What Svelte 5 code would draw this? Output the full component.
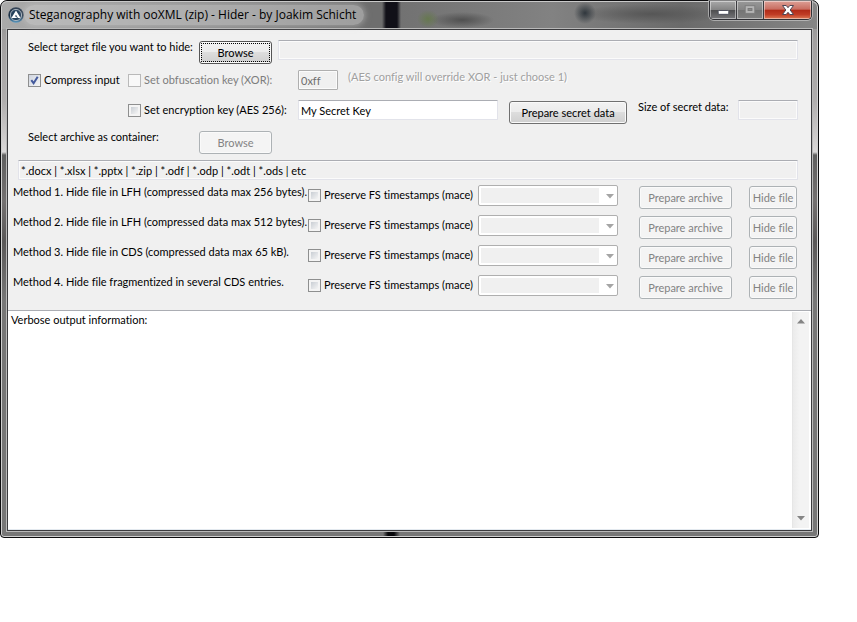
<script>
  const methods = [
    { n: 1, text: 'Hide file in LFH (compressed data max 256 bytes).' },
    { n: 2, text: 'Hide file in LFH (compressed data max 512 bytes).' },
    { n: 3, text: 'Hide file in CDS (compressed data max 65 kB).' },
    { n: 4, text: 'Hide file fragmentized in several CDS entries.' }
  ];
  let compress = $state(true);
  let useAes = $state(false);
  let secretKey = $state('My Secret Key');
  let output = $state('Verbose output information:');
</script>

<main class="window">
  <header class="titlebar">
    <svg class="logo" viewBox="0 0 16 16" aria-hidden="true">
      <defs>
        <linearGradient id="ring" x1="0" y1="0" x2="0" y2="1">
          <stop offset="0" stop-color="#38475a" />
          <stop offset="0.55" stop-color="#172c42" />
          <stop offset="1" stop-color="#5e9cc4" />
        </linearGradient>
      </defs>
      <circle cx="8" cy="8" r="7.7" fill="url(#ring)" />
      <circle cx="8" cy="8" r="5.6" fill="#26415b" stroke="#c3ccd4" stroke-width="0.8" />
      <path d="M8 3.4 12.6 11H9.9L8 7.7 6.8 9.6H8.1L9 11H3.4Z" fill="#fff" />
    </svg>
    <h1>Steganography with ooXML (zip) - Hider - by Joakim Schicht</h1>
    <div class="caption">
      <button class="min" aria-label="Minimize">
        <svg viewBox="0 0 27 18"><rect x="8.5" y="9.5" width="11" height="4" rx="1" fill="#fff" stroke="#4a4d5c" /></svg>
      </button>
      <button class="max" aria-label="Maximize" disabled>
        <svg viewBox="0 0 27 18"><rect x="8.5" y="4.5" width="10" height="8" fill="#b4b4b4" stroke="#7d7d7d" /><rect x="11.5" y="7.5" width="4" height="2" fill="#8c8c8c" stroke="#777" /></svg>
      </button>
      <button class="close" aria-label="Close">
        <svg viewBox="0 0 47 18"><path d="M18.5 4.5h3.7l1.8 2.2 1.8-2.2h3.7l-3.3 4.5 3.3 4.5h-3.7L24 11.3l-1.8 2.2h-3.7L21.8 9Z" fill="#fff" stroke="#4d4554" /></svg>
      </button>
    </div>
  </header>

  <div class="client">
    <form class="settings" onsubmit={(e) => e.preventDefault()}>
      <div class="row">
        <label class="lead" for="target">Select target file you want to hide:</label>
        <button class="btn browse focused" type="button">Browse</button>
        <input class="field grow" id="target" readonly />
      </div>
      <div class="row">
        <label class="check first"><input type="checkbox" bind:checked={compress} />Compress input</label>
        <label class="check key off"><input type="checkbox" disabled />Set obfuscation key (XOR):</label>
        <input class="field xor" aria-label="Obfuscation key" value="0xff" disabled />
        <span class="hint">(AES config will override XOR - just choose 1)</span>
      </div>
      <div class="row">
        <span class="first"></span>
        <label class="check key"><input type="checkbox" bind:checked={useAes} />Set encryption key (AES 256):</label>
        <input class="field secret" aria-label="Encryption key" bind:value={secretKey} />
        <button class="btn prepare" type="button">Prepare secret data</button>
        <label class="size" for="size">Size of secret data:</label>
        <input class="field total" id="size" readonly />
      </div>
      <div class="row">
        <label class="lead" for="container">Select archive as container:</label>
        <button class="btn browse" type="button" disabled>Browse</button>
      </div>
      <input class="field container" id="container" readonly value="*.docx | *.xlsx | *.pptx | *.zip | *.odf | *.odp | *.odt | *.ods | etc" />
    </form>

    <section class="methods">
      {#each methods as m (m.n)}
        <div class="row">
          <span class="name">Method {m.n}. {m.text}</span>
          <label class="check stamp"><input type="checkbox" />Preserve FS timestamps (mace)</label>
          <span class="combo">
            <select aria-label="Entry for method {m.n}" disabled><option></option></select>
            <svg viewBox="0 0 8 5" aria-hidden="true"><path d="M0 0h8L4 4.5Z" fill="#a5a5a5" /></svg>
          </span>
          <button class="btn archive" type="button" disabled>Prepare archive</button>
          <button class="btn hide" type="button" disabled>Hide file</button>
        </div>
      {/each}
    </section>

    <div class="log">
      <textarea aria-label="Output" bind:value={output} spellcheck="false"></textarea>
      <div class="scroll" aria-hidden="true">
        <svg viewBox="0 0 8 5"><path d="M0 4.5h8L4 0Z" fill="#858585" /></svg>
        <svg viewBox="0 0 8 5"><path d="M0 0h8L4 4.5Z" fill="#858585" /></svg>
      </div>
    </div>
  </div>
</main>

<style>
  :global(body) { background: #fff; }
  * { box-sizing: border-box; }
  .window {
    margin-right: 38px;
    padding: 0 6px 6px;
    border: 1px solid #0c0c0e;
    border-radius: 7px 7px 4px 4px;
    box-shadow: inset 0 0 0 1px #d0d0d0;
    background:
      linear-gradient(90deg, transparent 382px, #08080b 387px 393px, transparent 399px) bottom / 100% 6px no-repeat,
      linear-gradient(#8a8a8a, #a2a0a0 40px, #b0aeae 100px, #dad8d8 151px, #5f5f5f 154px, #747171 200px, #5a5858 240px, #777 300px, #777);
    font: 11px/14px Lato, "Liberation Sans", sans-serif;
    font-variant-ligatures: none;
    color: #000;
  }
  button, input, select, textarea { font: inherit; color: inherit; margin: 0; }
  .titlebar {
    display: flex;
    align-items: flex-start;
    height: 28px;
    margin: 0 -5px;
    padding-left: 6px;
    border-top: 1px solid #c9c9c9;
    border-radius: 6px 6px 0 0;
    background:
      radial-gradient(ellipse 11px 9px at 426px 17px, #66784f, transparent),
      radial-gradient(ellipse 32px 8px at 460px 18px, #505050, transparent),
      radial-gradient(circle 11px at 583px 11px, #30373d, transparent),
      radial-gradient(ellipse 76px 10px at 650px 12px, #565656, transparent),
      linear-gradient(90deg, #aaa 0, #8d8d8d 200px, #6e6e6e 365px, #6e6e6e 380px, #111018 384px 395px, #727272 399px, #828282 550px, #6a6a6a 680px, #858585);
  }
  .logo { width: 16px; height: 16px; margin-top: 5px; }
  h1 {
    margin: 3px 0 0;
    padding: 0 8px 0 5px;
    border-radius: 10px;
    background: rgb(205 205 205 / 50%);
    box-shadow: 0 0 6px 1px rgb(205 205 205 / 50%);
    font: 12px/20px "Open Sans", "Noto Sans", sans-serif;
    white-space: nowrap;
  }
  .caption {
    display: flex;
    margin: -1px 5px 0 auto;
    border: 1px solid #303035;
    border-top: 0;
    border-radius: 0 0 5px 5px;
    overflow: hidden;
    box-shadow: 0 0 0 1px rgb(210 210 210 / 60%);
  }
  .caption button {
    width: 27px;
    height: 18px;
    padding: 0;
    border: 0;
    border-right: 1px solid #3b3b3f;
    box-shadow: inset 0 0 0 1px rgb(255 255 255 / 45%);
    background: linear-gradient(#a9a9a9, #858585 48%, #4d4d4f 50%, #77777a);
  }
  .caption .max { background: linear-gradient(#999, #858585 48%, #747474 50%, #808080); }
  .caption .close {
    width: 47px;
    border-right: 0;
    background: linear-gradient(#dda096, #c96d60 46%, #b02a17 50%, #c03c25 75%, #dc7a55);
  }
  .caption svg { display: block; width: 100%; height: 18px; }
  .client {
    border: 1px solid #3b3b3e;
    outline: 1px solid #b9b9b9;
    background: #f0f0f0;
  }
  .settings { padding: 10px 13px 0 10px; }
  .row { display: flex; align-items: flex-start; height: 30px; white-space: nowrap; }
  .settings .row { padding-left: 10px; }
  .lead { width: 171px; }
  .first { flex: none; width: 100px; }
  .key { flex: none; width: 170px; }
  .check { display: flex; align-items: center; gap: 3px; height: 20px; }
  .check.off { color: #7d7d7d; }
  .check input {
    appearance: none;
    flex: none;
    width: 13px;
    height: 13px;
    border: 1px solid #8e8f8f;
    background: linear-gradient(135deg, #c9ced4, #f5f5f5) content-box, #f4f4f4;
    padding: 2px;
  }
  .check input:disabled { border-color: #b9b9b9; background: #f8f8f8; }
  .check input:checked {
    background: url("data:image/svg+xml,%3Csvg xmlns='http://www.w3.org/2000/svg' viewBox='0 0 11 11'%3E%3Cpath d='M2.3 5.2 4.6 8.2 8.7 1.8' fill='none' stroke='%23445a9c' stroke-width='2'/%3E%3C/svg%3E"), linear-gradient(135deg, #cfd5e0, #f5f5f5);
    background-origin: padding-box;
  }
  .field {
    height: 20px;
    min-width: 0;
    padding: 0 2px;
    border: 1px solid #e2e3ea;
    border-top-color: #abadb3;
    border-radius: 1px;
    outline: 0;
    background: #fff;
  }
  .field:read-only { background: #f0f0f0; box-shadow: inset 0 0 0 1px #fbfbfb; }
  .field:disabled { border-color: #afafaf; color: #6d6d6d; background: #f0f0f0; }
  .grow { flex: 1; margin-left: 6px; }
  .xor { width: 40px; }
  .hint { margin-left: 10px; color: #a0a0a0; text-shadow: 1px 1px #fff; }
  .secret { width: 200px; }
  .size { margin-left: 11px; }
  .total { width: 60px; margin-left: auto; }
  .container { display: block; width: 100%; }
  .btn {
    flex: none;
    height: 23px;
    margin-top: 1px;
    padding: 0;
    border: 1px solid #707070;
    border-radius: 3px;
    box-shadow: inset 0 0 0 1px #fafafa;
    background: linear-gradient(#f2f2f2, #ebebeb 50%, #dddddd 50%, #cfcfcf);
    text-align: center;
  }
  .btn:disabled { border-color: #adb2b5; color: #838383; background: #f4f4f4; }
  .focused { outline: 1px dotted #000; outline-offset: -3px; border-color: #555; }
  .browse { width: 73px; }
  .prepare { width: 118px; margin-left: 11px; }
  .methods { padding: 5px 14px 5px 5px; }
  .name { width: 295px; }
  .stamp { width: 170px; }
  .combo { position: relative; width: 140px; height: 21px; }
  .combo select {
    appearance: none;
    display: block;
    width: 100%;
    height: 21px;
    padding: 2px 18px 2px 2px;
    border: 1px solid #afafaf;
    border-radius: 2px;
    opacity: 1;
    background: linear-gradient(#f0f0f0, #f0f0f0) content-box, #fff;
  }
  .combo svg { position: absolute; right: 4px; top: 9px; width: 8px; height: 5px; }
  .archive { width: 93px; margin-left: 21px; }
  .hide { width: 48px; margin-left: auto; }
  .log {
    display: flex;
    min-height: 220px;
    padding-right: 2px;
    border-top: 1px solid #abadb3;
    border-bottom: 1px solid #e3e9ef;
    background: #fff;
  }
  textarea {
    flex: 1;
    padding: 2px 3px;
    border: 0;
    outline: 0;
    resize: none;
    overflow: hidden;
    background: #fff;
  }
  .scroll {
    display: flex;
    flex-direction: column;
    justify-content: space-between;
    align-items: center;
    width: 17px;
    margin: 1px 0;
    padding: 7px 0;
    border-left: 1px solid #e6e6e6;
    background: linear-gradient(90deg, #ebebeb, #f3f3f3 40%);
  }
  .scroll svg { width: 8px; height: 5px; }
</style>
